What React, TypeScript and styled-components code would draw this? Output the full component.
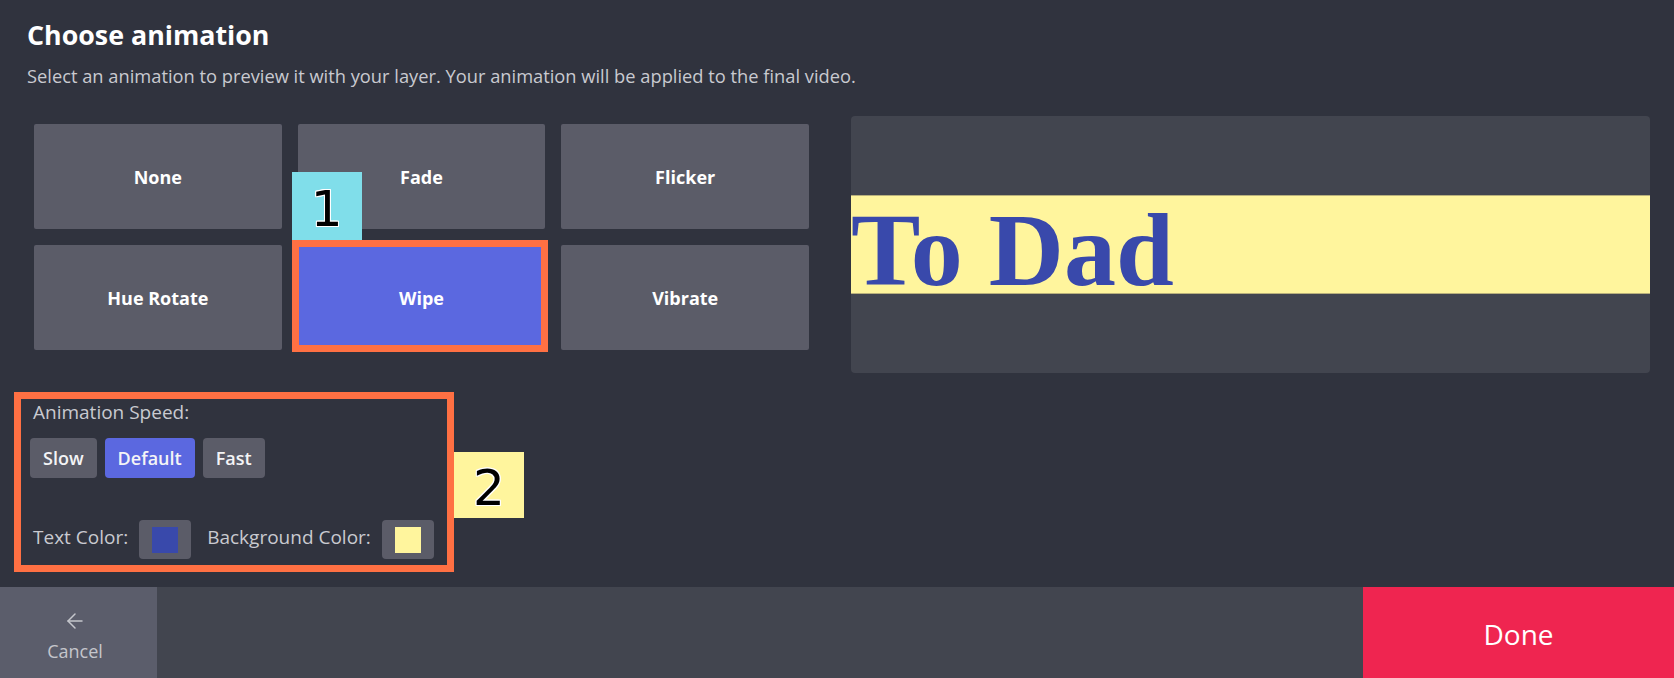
import styled, { createGlobalStyle } from 'styled-components';
import { ArrowLeft } from 'lucide-react';

const GlobalStyle = createGlobalStyle`
    body {
        margin: 0;
        background: #30333e;
        font-family: "Open Sans", "Noto Sans", sans-serif;
    }
    * { box-sizing: border-box; }
`

const animations = ['None', 'Fade', 'Flicker', 'Hue Rotate', 'Wipe', 'Vibrate'];
const speeds = ['Slow', 'Default', 'Fast'];

function App() {
    const selected = 'Wipe';
    const speed = 'Default';

    return (<>
        <GlobalStyle />
        <Page>
            <Main>
                <Title>Choose animation</Title>
                <Subtitle>Select an animation to preview it with your layer. Your animation will be applied to the final video.</Subtitle>
                <Row>
                    <TileGrid>
                        {animations.map((name) => (
                            <Tile key={name} $active={name === selected}>
                                {name}
                                {name === selected && <>
                                    <TileMarker />
                                    <Badge $bg="#80deea" $left={-6} $top={-73} $height={68}>1</Badge>
                                </>}
                            </Tile>
                        ))}
                    </TileGrid>
                    <Preview>
                        <Band>
                            <PreviewText>To Dad</PreviewText>
                        </Band>
                    </Preview>
                </Row>
                <Settings>
                    <Label>Animation Speed:</Label>
                    <SpeedRow>
                        {speeds.map((s) => (
                            <SpeedBtn key={s} $active={s === speed}>{s}</SpeedBtn>
                        ))}
                    </SpeedRow>
                    <ColorRow>
                        <ColorLabel>Text Color:</ColorLabel>
                        <SwatchBtn><Swatch $color="#3949ab" /></SwatchBtn>
                        <ColorLabel $gap={16}>Background Color:</ColorLabel>
                        <SwatchBtn><Swatch $color="#fff59d" /></SwatchBtn>
                    </ColorRow>
                    <Annotation />
                    <Badge $bg="#fff59d" $left={424} $top={52} $height={66}>2</Badge>
                </Settings>
            </Main>
            <Footer>
                <CancelBtn>
                    <ArrowLeft size={24} strokeWidth={1.5} />
                    <span>Cancel</span>
                </CancelBtn>
                <DoneBtn>Done</DoneBtn>
            </Footer>
        </Page>
    </>)
}

let Page = styled.div`
    height: 678px;
    display: flex;
    flex-direction: column;
    background: #30333e;
`
let Main = styled.main`
    flex: 1;
    padding: 18px 24px 0 27px;
`
let Title = styled.h1`
    margin: 0;
    font-size: 26.8px;
    line-height: 34px;
    font-weight: 700;
    color: #ffffff;
`
let Subtitle = styled.p`
    margin: 12px 0 0;
    font-size: 18.3px;
    line-height: 24px;
    color: #c9cad0;
`
let Row = styled.div`
    display: flex;
    gap: 42px;
    margin-top: 28px;
`
let TileGrid = styled.div`
    width: 775px;
    margin-left: 7px;
    padding-top: 8px;
    display: grid;
    grid-template-columns: repeat(3, 1fr);
    grid-auto-rows: 105px;
    gap: 16px;
`
let Tile = styled.button<{ $active?: boolean }>`
    position: relative;
    border: 0;
    border-radius: 2px;
    background: ${p => p.$active ? '#5b68e0' : '#5b5c68'};
    color: #ffffff;
    font-family: inherit;
    font-size: 18px;
    font-weight: 700;
    cursor: pointer;
`
let TileMarker = styled.span`
    position: absolute;
    top: -5px;
    left: -6px;
    right: -3px;
    bottom: -2px;
    border: 7px solid #ff7043;
    pointer-events: none;
`
let Badge = styled.span<{ $bg: string, $left: number, $top: number, $height: number }>`
    position: absolute;
    left: ${p => p.$left}px;
    top: ${p => p.$top}px;
    width: 70px;
    height: ${p => p.$height}px;
    background: ${p => p.$bg};
    display: flex;
    align-items: center;
    justify-content: center;
    padding-top: 6px;
    font-family: "DejaVu Sans", sans-serif;
    font-size: 50px;
    font-weight: 400;
    color: #000000;
    text-shadow: 1px 0 0 #fff, -1px 0 0 #fff, 0 1px 0 #fff, 0 -1px 0 #fff,
        1px 1px 0 #fff, -1px -1px 0 #fff, 1px -1px 0 #fff, -1px 1px 0 #fff;
    z-index: 2;
`
let Preview = styled.div`
    flex: 1;
    height: 257px;
    border-radius: 4px;
    background: #42454f;
    display: flex;
    align-items: center;
    overflow: hidden;
`
let Band = styled.div`
    width: 100%;
    height: 99px;
    background: #fff59d;
    border-top: 1px solid #b8b07c;
    border-bottom: 1px solid #b8b07c;
`
let PreviewText = styled.div`
    margin-top: 2px;
    font-family: "Liberation Serif", serif;
    font-weight: 700;
    font-size: 104px;
    line-height: 104px;
    color: #3949ab;
    white-space: nowrap;
`
let Settings = styled.div`
    position: relative;
    width: 424px;
    margin: 27px 0 0 3px;
`
let Annotation = styled.div`
    position: absolute;
    top: -8px;
    left: -16px;
    right: 0;
    bottom: -13px;
    border: 7px solid #ff7043;
    pointer-events: none;
`
let Label = styled.div`
    padding-left: 3px;
    font-size: 19px;
    line-height: 24px;
    color: #c9cad0;
`
let ColorLabel = styled.span<{ $gap?: number }>`
    font-size: 19px;
    line-height: 24px;
    color: #c9cad0;
    margin-bottom: 5px;
    margin-left: ${p => p.$gap ? p.$gap - 11 : 3}px;
`
let SpeedRow = styled.div`
    display: flex;
    gap: 8px;
    margin-top: 14px;
`
let SpeedBtn = styled.button<{ $active?: boolean }>`
    height: 40px;
    padding: 0 13px;
    border: 0;
    border-radius: 4px;
    background: ${p => p.$active ? '#5b68e0' : '#5b5c68'};
    color: #f4f4f6;
    font-family: inherit;
    font-size: 18px;
    font-weight: 600;
`
let ColorRow = styled.div`
    display: flex;
    align-items: center;
    gap: 11px;
    margin-top: 42px;
`
let SwatchBtn = styled.button`
    width: 52px;
    height: 39px;
    border: 0;
    border-radius: 4px;
    background: #5b5c68;
    display: flex;
    align-items: center;
    justify-content: center;
    padding: 0;
`
let Swatch = styled.span<{ $color: string }>`
    width: 26px;
    height: 26px;
    background: ${p => p.$color};
`
let Footer = styled.footer`
    height: 91px;
    display: flex;
    background: #42454f;
`
let CancelBtn = styled.button`
    width: 157px;
    border: 0;
    background: #5b5d6b;
    color: #c5c6cc;
    display: flex;
    flex-direction: column;
    align-items: center;
    padding: 22px 7px 0 0;
    gap: 6px;
    font-family: inherit;
    font-size: 18px;
    line-height: 24px;
`
let DoneBtn = styled.button`
    margin-left: auto;
    width: 311px;
    border: 0;
    background: #ef2550;
    color: #ffffff;
    font-family: inherit;
    font-size: 28px;
    font-weight: 500;
    padding-top: 4px;
`

export default App;
